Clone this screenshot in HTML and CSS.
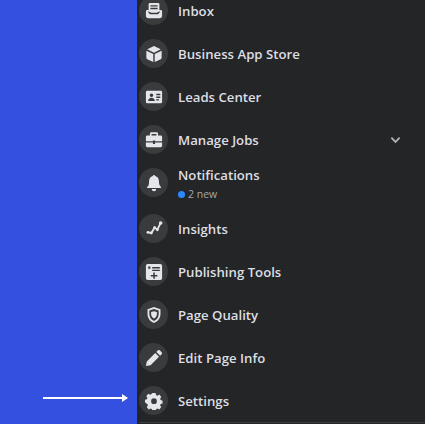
FILE: index.html
```html
<!DOCTYPE html>
<html lang="en">
<head>
    <meta charset="UTF-8">
    <title>Page menu</title>
    <link rel="stylesheet" href="styles.css">
</head>
<body>
    <div class="page">
        <div class="backdrop">
            <div class="arrow"></div>
        </div>
        <div class="menu">
            <div class="item">
                <div class="circle">
                    <svg viewBox="0 0 20 20"><path fill-rule="evenodd" d="M5.500 1h9A1.500 1.500 0 0 1 16 2.500V9h1.500A1.500 1.500 0 0 1 19 10.500V15a3 3 0 0 1-3 3H4a3 3 0 0 1-3-3v-4.500A1.500 1.500 0 0 1 2.500 9H4V2.500A1.500 1.500 0 0 1 5.500 1zM6 3.500V5h8V3.500zM6 6.500V8h8V6.500zM4 10.500H3l2.500 3h9l2.500-3h-1L13 12H7z"/></svg>
                </div>
                <span class="label">Inbox</span>
            </div>
            <div class="item">
                <div class="circle">
                    <svg viewBox="0 0 20 20"><path d="M10 1l7.500 3.700L10 8.500 2.500 4.700zM1.500 6.300L9.200 10v9l-6.700-3.300a1.800 1.800 0 0 1-1-1.600zM18.500 6.300V14.100a1.800 1.800 0 0 1-1 1.600L10.800 19v-9z"/></svg>
                </div>
                <span class="label">Business App Store</span>
            </div>
            <div class="item">
                <div class="circle">
                    <svg viewBox="0 0 20 20"><path fill-rule="evenodd" d="M2.500 3h15A1.500 1.500 0 0 1 19 4.500v11a1.500 1.500 0 0 1-1.500 1.500h-15A1.500 1.500 0 0 1 1 15.500v-11A1.500 1.500 0 0 1 2.500 3zM7.200 6a2 2 0 1 0 0 4 2 2 0 0 0 0-4zM3.500 14.500h7.400c0-2.200-1.600-3.700-3.700-3.700s-3.700 1.500-3.700 3.700zM12.500 6.500V8h4.500V6.500zM12.500 9.500V11h4.500V9.500zM12.500 12.500V14h3V12.500z"/></svg>
                </div>
                <span class="label">Leads Center</span>
            </div>
            <div class="item">
                <div class="circle">
                    <svg viewBox="0 0 20 20"><path fill-rule="evenodd" d="M7 1.500h6a1.500 1.500 0 0 1 1.500 1.500v2h3A1.500 1.500 0 0 1 19 6.500V11.500H11.200V10.500H8.800v1H1V6.500A1.500 1.500 0 0 1 2.500 5h3V3A1.500 1.500 0 0 1 7 1.500zM7.300 3.300V5h5.400V3.300zM1 12.700h7.800V14.500h2.400v-1.800H19V16.500A1.500 1.500 0 0 1 17.500 18h-15A1.500 1.500 0 0 1 1 16.500z"/></svg>
                </div>
                <span class="label">Manage Jobs</span>
                <svg class="chevron" viewBox="0 0 12 8"><path d="M1.500 1.500L6 6l4.500-4.500"/></svg>
            </div>
            <div class="item item-tall">
                <div class="circle">
                    <svg viewBox="0 0 20 20"><path d="M10 1a1.300 1.300 0 0 1 1.300 1.200c2.700.6 4.200 2.900 4.200 5.800 0 3.300.7 4.800 2.200 6.300.4.400.1 1.200-.5 1.200H2.800c-.6 0-.9-.8-.5-1.200C3.800 13.800 4.500 12.300 4.500 8c0-2.900 1.500-5.200 4.200-5.800A1.300 1.300 0 0 1 10 1zM7.500 16.700h5a2.500 2.500 0 0 1-5 0z"/></svg>
                </div>
                <div class="label-stack">
                    <span class="label">Notifications</span>
                    <span class="sub"><i class="dot"></i>2 new</span>
                </div>
            </div>
            <div class="item">
                <div class="circle">
                    <svg viewBox="0 0 20 20"><path class="line" d="M3.300 13.700L7 14.400l3.700-5.900 3 2.300 3.700-7.500"/><circle cx="3.300" cy="13.700" r="1.600"/><circle cx="7" cy="14.400" r="1.600"/><circle cx="10.700" cy="8.500" r="1.600"/><circle cx="13.700" cy="10.800" r="1.600"/><circle cx="17.400" cy="3.300" r="2"/></svg>
                </div>
                <span class="label">Insights</span>
            </div>
            <div class="item">
                <div class="circle">
                    <svg viewBox="0 0 20 20"><path fill-rule="evenodd" d="M3 1h14a2 2 0 0 1 2 2v14a2 2 0 0 1-2 2H3a2 2 0 0 1-2-2V3a2 2 0 0 1 2-2zM3.500 4v2.500H6V4zM8 4.500V6h8.500V4.500zM8 7.500V9h8.500V7.500zM9.200 10.500v2.700H6.400v1.700h2.800v2.700h1.700v-2.700h2.800v-1.700h-2.800v-2.700z"/></svg>
                </div>
                <span class="label">Publishing Tools</span>
            </div>
            <div class="item">
                <div class="circle">
                    <svg viewBox="0 0 20 20"><path fill-rule="evenodd" d="M10 1l7.200 2.600V9c0 4.700-2.900 8.400-7.200 10C5.700 17.400 2.800 13.700 2.800 9V3.600zM10 3.200L4.800 5.100V9c0 3.500 2 6.400 5.200 7.800 3.200-1.400 5.200-4.300 5.200-7.800V5.100zM10 5.700l3.200 1.100v2.500c0 2-1.300 3.700-3.200 4.700-1.900-1-3.200-2.700-3.200-4.700V6.800z"/></svg>
                </div>
                <span class="label">Page Quality</span>
            </div>
            <div class="item">
                <div class="circle">
                    <svg viewBox="0 0 20 20"><path d="M14.300 1.500a1.500 1.500 0 0 1 2.100 0l2.100 2.100a1.500 1.500 0 0 1 0 2.100l-1.700 1.700-4.200-4.200zM11.400 4.400l4.200 4.200L6.200 18 1 19l1-5.200z"/></svg>
                </div>
                <span class="label">Edit Page Info</span>
            </div>
            <div class="item">
                <div class="circle">
                    <svg viewBox="0 0 20 20"><path fill-rule="evenodd" d="M8.200 1h3.600l.5 2.300 1.500.8 2.100-1.200 2.200 2.700-1.300 1.900.6 1.500 2.100.6v3.200l-2.100.6-.6 1.500 1.300 1.900-2.200 2.700-2.100-1.200-1.500.8-.5 2.300H8.200l-.5-2.300-1.500-.8-2.100 1.200-2.200-2.700 1.300-1.900-.6-1.500L0 11.800V8.600l2.100-.6.600-1.500-1.300-1.900 2.200-2.700 2.100 1.200 1.500-.8zM10 7a3.200 3.200 0 1 0 0 6.400A3.200 3.200 0 0 0 10 7z"/></svg>
                </div>
                <span class="label">Settings</span>
            </div>
        </div>
    </div>
</body>
</html>
```

FILE: styles.css
```css
html, body {
    margin: 0;
    height: 100%;
    overflow: hidden;
}
.page {
    display: flex;
    height: 424px;
    font-family: "Open Sans", sans-serif;
}
.backdrop {
    width: 137px;
    box-sizing: border-box;
    background-color: #3450e0;
    display: flex;
    align-items: flex-end;
    padding: 0 10px 25px 43px;
}
.arrow {
    flex: 1;
    height: 2px;
    background-color: #fff;
    position: relative;
}
.arrow::after {
    content: "";
    position: absolute;
    right: -1px;
    top: -3px;
    border-left: 6px solid #fff;
    border-top: 4px solid transparent;
    border-bottom: 4px solid transparent;
}
.menu {
    flex: 1;
    background-color: #242526;
    padding-left: 2px;
}
.item {
    display: flex;
    align-items: center;
    height: 43px;
    gap: 10px;
    padding-right: 24px;
}
.item:first-child {
    margin-top: -11px;
}
.item:last-child {
    border-bottom: 1px solid #3a3b3c;
    padding-right: 0;
}
.item-tall {
    height: 46px;
    align-items: flex-start;
}
.circle {
    width: 29px;
    height: 29px;
    flex-shrink: 0;
    border-radius: 50%;
    background-color: #3a3b3c;
    display: flex;
    align-items: center;
    justify-content: center;
}
.item-tall .circle {
    margin-top: 7px;
}
.circle svg {
    width: 18px;
    height: 18px;
    fill: #e4e6eb;
}
.circle .line {
    fill: none;
    stroke: #e4e6eb;
    stroke-width: 2;
}
.label {
    font-size: 13.2px;
    font-weight: 600;
    color: #dcdee3;
}
.label-stack {
    display: flex;
    flex-direction: column;
    margin-top: 5px;
}
.sub {
    display: flex;
    align-items: center;
    gap: 3px;
    font-size: 10.5px;
    line-height: 14px;
    margin-top: 3px;
    color: #a5a8ad;
}
.dot {
    width: 7px;
    height: 7px;
    border-radius: 50%;
    background-color: #2d88ff;
}
.chevron {
    width: 11px;
    height: 8px;
    margin-left: auto;
    fill: none;
    stroke: #b0b3b8;
    stroke-width: 2;
}
```
